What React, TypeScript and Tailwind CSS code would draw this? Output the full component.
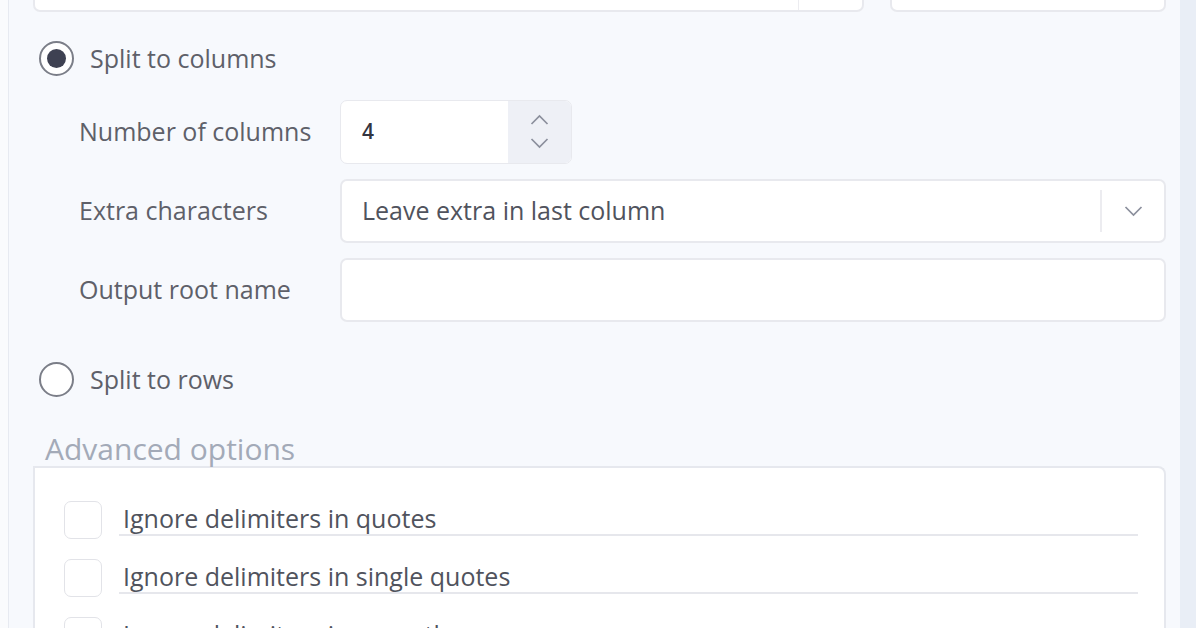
import type {FunctionComponent, ReactNode} from 'react'

const font = {fontFamily: '"Open Sans", "Noto Sans", sans-serif'}

const Chevron: FunctionComponent<{dir: 'up' | 'down'; className?: string}> = ({dir, className}) => (
  <svg viewBox="0 0 20 12" className={className} fill="none" stroke="currentColor" strokeWidth={1.7}>
    {dir === 'up' ? <path d="M2 10 L10 2 L18 10" /> : <path d="M2 2 L10 10 L18 2" />}
  </svg>
)

const Radio: FunctionComponent<{checked?: boolean; label: string}> = ({checked, label}) => (
  <label className="flex items-center gap-[16px]">
    <span className="flex h-[35px] w-[35px] items-center justify-center rounded-full border-2 border-[#7b7e88] bg-white">
      {checked && <span className="h-[19px] w-[19px] rounded-full bg-[#3e4152]" />}
    </span>
    <span className="text-[25px] text-[#5e6069]">{label}</span>
  </label>
)

const Field: FunctionComponent<{label: string; children: ReactNode}> = ({label, children}) => (
  <div className="flex items-center">
    <span className="w-[261px] text-[25px] text-[#5e6069]">{label}</span>
    {children}
  </div>
)

// checkbox row; the rule under the label clips the descenders like the original control
const Check: FunctionComponent<{label: string; checked?: boolean}> = ({label, checked}) => (
  <div className="flex h-[58px] items-start pl-[29px]">
    <span className="mt-[10px] flex h-[38px] w-[38px] shrink-0 items-center justify-center rounded-[7px] border border-[#e2e3e8] bg-white">
      {checked && (
        <svg viewBox="0 0 16 16" className="h-[18px] w-[18px] text-[#5b5d66]" fill="none" stroke="currentColor" strokeWidth={2}>
          <path d="M3 8.5 L6.5 12 L13 4" />
        </svg>
      )}
    </span>
    <span className="mt-[10px] ml-[17px] mr-[26px] h-[35px] flex-1 overflow-hidden border-b-2 border-[#e6e7ec] pl-[4px]">
      <span className="block text-[25px] leading-[34px] text-[#50535d]">{label}</span>
    </span>
  </div>
)

export default function App() {
  return (
    <div className="flex h-[628px] w-[1196px] overflow-hidden bg-[#f7f9fd]" style={font}>
      <div className="w-[9px] border-r border-[#e7eaf1] bg-[#fafbfd]" />
      <main className="flex-1 pl-[24px] pr-[14px]">
        {/* inputs from the section above, scrolled mostly out of view */}
        <div className="mt-[-52px] flex h-[64px] gap-[26px]">
          <div className="flex flex-[833] rounded-[7px] border-2 border-[#e8e9ee] bg-white">
            <div className="flex-1" />
            <div className="w-[64px] border-l border-[#ececf0]" />
          </div>
          <div className="flex-[274] rounded-[7px] border-2 border-[#e8e9ee] bg-white" />
        </div>

        <div className="mt-[28px] pl-[6px]">
          <Radio checked label="Split to columns" />
        </div>

        <div className="mt-[22px] flex flex-col gap-[15px] pl-[46px]">
          <Field label="Number of columns">
            <div className="flex h-[64px] w-[232px] overflow-hidden rounded-[7px] border border-[#e8e9ee] bg-white">
              <span className="flex flex-1 items-center pl-[21px] text-[21px] font-semibold text-[#333540]">4</span>
              <div className="flex w-[63px] flex-col items-center justify-center gap-[11px] bg-[#eef0f6] text-[#8b8f9c]">
                <Chevron dir="up" className="h-[12px] w-[23px]" />
                <Chevron dir="down" className="h-[12px] w-[23px]" />
              </div>
            </div>
          </Field>
          <Field label="Extra characters">
            <div className="flex h-[64px] flex-1 items-center rounded-[7px] border-2 border-[#e8e9ee] bg-white">
              <span className="flex-1 pl-[20px] text-[25px] text-[#50535d]">Leave extra in last column</span>
              <div className="flex h-[42px] w-[64px] items-center justify-center border-l-2 border-[#ececf0] text-[#8b8f9c]">
                <Chevron dir="down" className="h-[12px] w-[23px]" />
              </div>
            </div>
          </Field>
          <Field label="Output root name">
            <div className="h-[64px] flex-1 rounded-[7px] border-2 border-[#e8e9ee] bg-white" />
          </Field>
        </div>

        <div className="mt-[39px] pl-[6px]">
          <Radio label="Split to rows" />
        </div>

        <h3 className="mt-[34px] pl-[12px] text-[30px] leading-[34px] text-[#a3aab8]">Advanced options</h3>

        <section className="h-[300px] rounded-tr-[8px] border-2 border-b-0 border-[#e6e8ee] bg-white pt-[23px]">
          <Check label="Ignore delimiters in quotes" />
          <Check label="Ignore delimiters in single quotes" />
          <Check label="Ignore delimiters in parentheses" checked />
        </section>
      </main>
      <div className="w-[16px] bg-[#e9eef6]" />
    </div>
  )
}
